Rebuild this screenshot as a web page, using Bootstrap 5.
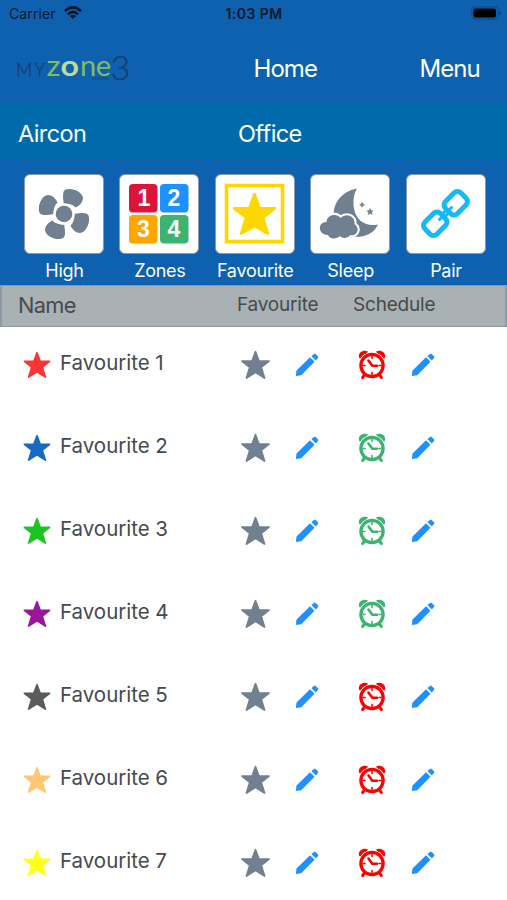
<!DOCTYPE html>
<html lang="en">
<head>
<meta charset="utf-8">
<meta name="viewport" content="width=device-width, initial-scale=1">
<title>MyZone 3 – Favourites</title>
<link href="https://cdn.jsdelivr.net/npm/bootstrap@5.3.0/dist/css/bootstrap.min.css" rel="stylesheet">
<style>
body{font-family:Inter,"Liberation Sans",sans-serif;color:#444a4e;background:#fff;overflow:hidden}
.app{width:507px;height:900px;overflow:hidden}
svg{display:block;flex:none}
.status{height:28px;background:#0d61af;color:#06182b;font-size:14px;padding:0 5px 0 9px;display:grid;grid-template-columns:1fr auto 1fr;line-height:28px}
.status svg{margin-bottom:2px}
.status .carrier{letter-spacing:.1px}
.status .clock{font-weight:600;font-size:14px;letter-spacing:.45px;margin-left:-3px}
.topnav{height:76px;background:#0d61af;color:#fff;display:grid;grid-template-columns:253.5px 166px 1fr;font-size:24px;letter-spacing:-.95px;padding-top:6px}
.topnav .brand{letter-spacing:0}
.place{height:56px;background:#016aab;color:#fff;display:grid;grid-template-columns:220px 1fr;font-size:23.5px;letter-spacing:-.6px;padding:3px 18px 0}
.modes{height:125px;background:#0d61af;color:#fff;padding:14px 21.5px 0 24px;display:grid;grid-template-columns:repeat(5,80px);justify-content:space-between}
.tile{width:80px;height:80px;background:#fff;border:1px solid #8a9aac;border-radius:6px}
.tile-label{font-size:18px;line-height:20px;margin-top:7px;margin-left:1px;letter-spacing:-.25px}
.heads{height:42px;background:#a9b1b4;border:1px solid #8d999f;border-top-color:#8096aa;border-left:2px solid #8b9aa6;border-right:2px solid #8b9aa6;display:grid;grid-template-columns:219px 116px 1fr;padding-left:16px;color:#454b4e;font-size:19px;line-height:37px;letter-spacing:-.2px}
.heads .first{font-size:21.8px;line-height:39px;letter-spacing:-.7px}
.fav-row{height:83px;display:grid;grid-template-columns:37px 179.5px 55.5px 63px 53px 1fr;padding:0 0 7px 23px}
.fav-name{font-size:20.5px;letter-spacing:-.02px;line-height:24px;padding-bottom:4px}
</style>
<script src="https://cdn.jsdelivr.net/npm/bootstrap@5.3.0/dist/js/bootstrap.bundle.min.js"></script>
</head>
<body>
<svg width="0" height="0" class="position-absolute" aria-hidden="true">
  <symbol id="star" viewBox="0 0 30 30"><path d="M15 1.800 18.400 11.100H28.500L20.700 17.300 24 28 15 22.200 6 28 9.300 17.300 1.500 11.100H11.600Z" fill="currentColor" stroke="currentColor" stroke-width="1.800" stroke-linejoin="round"/></symbol>
  <symbol id="pencil" viewBox="0 0 24 24"><path d="M.8 23 1.500 17.600 15 4.200 19.500 8.700 6.200 22.200ZM16.400 3 19 .9Q19.800.2 20.600.9L23 3.300Q23.700 4.100 23 4.900L20.800 7.400Z" fill="currentColor"/></symbol>
  <symbol id="alarm" viewBox="0 0 28 30"><g fill="none" stroke="currentColor" stroke-linecap="round">
    <circle cx="14" cy="15.500" r="11.100" stroke-width="3.300"/>
    <path d="M6 25.500 4.700 27.500M22 25.500 23.300 27.500" stroke-width="3.200"/>
    <path d="M14 6.500v2M14 22.500v2M5 15.500h2M21 15.500h2" stroke-width="1.600"/>
    <path d="M10.500 10.500 14.300 15.800 19 15.700" stroke-width="2.600" stroke-linejoin="round"/></g>
    <path d="M1.200 8C-.6 3.300 4.600-1 10 1.600L9 3.100Q4.800 4.300 2.200 8.400ZM26.800 8C28.600 3.300 23.400-1 18 1.600L19 3.100Q23.200 4.300 25.800 8.400Z" fill="currentColor"/></symbol>
</svg>
<div class="app">
  <div class="status">
    <div class="d-flex align-items-center"><span class="carrier me-1">Carrier</span>
      <svg width="18" height="14" viewBox="0 0 18 14" fill="none" stroke="#041322" stroke-width="2.500" class="ms-1"><path d="M1 5.200Q9-2.400 17 5.200M3.900 8.200Q9 3.600 14.100 8.200"/><path d="M9 13 5.900 9.900Q9 7.500 12.100 9.900Z" fill="#041322" stroke="none"/></svg>
    </div>
    <div class="clock">1:03 PM</div>
    <div class="d-flex align-items-center justify-content-end"><svg width="31" height="14" viewBox="0 0 31 14"><rect x=".8" y=".8" width="26.400" height="12.400" rx="3.600" fill="none" stroke="#0a4d8d" stroke-width="1.200"/><rect x="2.500" y="2.500" width="22.500" height="9" rx="2" fill="#000"/><path d="M28.500 5v4q1.600-.5 1.600-2t-1.600-2" fill="#084277"/></svg></div>
  </div>
  <nav class="topnav align-items-center">
    <svg class="ms-3 brand" width="118" height="48" viewBox="0 -8 118 48" font-family="Lato, sans-serif">
      <text x="0" y="22.500" font-size="18" fill="#173e69" textLength="29" lengthAdjust="spacing" font-weight="300" stroke="#173e69" stroke-width=".25">MY</text>
      <g font-size="29" fill="#80bd59"><text x="30.500" y="22.500" textLength="14" lengthAdjust="spacingAndGlyphs">z</text><text x="64" y="22.500" textLength="31" lengthAdjust="spacing">ne</text></g>
      <text x="44.500" y="22.500" font-size="29" font-weight="700" fill="#bddb98" textLength="18.500" lengthAdjust="spacingAndGlyphs">o</text>
      <text x="94.500" y="26.500" font-size="34" font-weight="300" fill="#173e69" stroke="#173e69" stroke-width=".3">3</text>
      <path d="M76 25.500h16" stroke="#174f82" stroke-width="2.500" stroke-dasharray="2 .8"/>
    </svg>
    <span>Home</span><span>Menu</span>
  </nav>
  <div class="place align-items-center"><span>Aircon</span><span>Office</span></div>
  <div class="modes text-center">
    <div class="d-flex flex-column align-items-center"><div class="tile">
      <svg width="78" height="78" viewBox="0 0 78 78" fill="#708090"><path id="blade" d="M39 29Q36.500 17 40 14.700C46.500 12 57.500 16.500 58 23C57.500 28 54.500 30.500 50.500 32.500Q46 27.700 39 29Z"/><use href="#blade" transform="rotate(90 39 39)"/><use href="#blade" transform="rotate(180 39 39)"/><use href="#blade" transform="rotate(270 39 39)"/><circle cx="39" cy="39" r="10.800" fill="#fff"/><circle cx="39" cy="39" r="8.300"/></svg>
      </div><div class="tile-label">High</div></div>
    <div class="d-flex flex-column align-items-center"><div class="tile">
      <svg width="78" height="78" viewBox="0 0 78 78" font-family="'Liberation Sans', sans-serif" font-weight="700" font-size="23" text-anchor="middle"><rect x="9" y="9" width="28.500" height="28.500" rx="4" fill="#dc143c"/><rect x="40" y="9" width="28.500" height="28.500" rx="4" fill="#1e90ff"/><rect x="9" y="40" width="28.500" height="28.500" rx="4" fill="#ffa500"/><rect x="40" y="40" width="28.500" height="28.500" rx="4" fill="#3cb371"/><g fill="#fff"><text x="24" y="31">1</text><text x="54" y="31">2</text><text x="23.500" y="61.500">3</text><text x="54" y="61.500">4</text></g></svg>
      </div><div class="tile-label">Zones</div></div>
    <div class="d-flex flex-column align-items-center"><div class="tile">
      <svg width="78" height="78" viewBox="0 0 78 78"><rect x="10.500" y="10.500" width="56" height="56" fill="none" stroke="#ffd700" stroke-width="3.600"/><path d="M38.500 19 43.600 33.300H59L47 42.700 51.800 58.500 38.500 51 25.200 58.500 30 42.700 18 33.300H33.400Z" fill="#ffd700" stroke="#ffd700" stroke-width="2.600" stroke-linejoin="round"/></svg>
      </div><div class="tile-label">Favourite</div></div>
    <div class="d-flex flex-column align-items-center"><div class="tile">
      <svg width="78" height="78" viewBox="0 0 78 78"><path d="M46 13.500C30 16.500 19 30 24 47C28 58 38 63 50 61.500C58 60.500 64 56 67 49.500C55 52 46.500 46 43.500 36C41.500 27.500 42.500 19 46 13.500Z" fill="#708090"/><path d="M17 60C7 60 6 47 15.500 47C16 39 26 38 29.500 43C36 37 44.500 42 43.500 49C50 54 45.500 61.500 39.500 60C36 64 31 63.500 29 61C25 65 18 63.500 17 60Z" fill="#708090" stroke="#fff" stroke-width="4" paint-order="stroke"/><path d="M51 27.300 52 29 53.700 29.700 52 30.700 51 32.200 50 30.700 48.600 29.700 50.200 29ZM59 33.500 60 35.500 62 35.700 60.700 37.300 61.200 39.500 59 38.500 57 39.500 57.400 37.300 56 35.700 58.200 35.500Z" fill="#708090" stroke="#708090" stroke-width=".5"/></svg>
      </div><div class="tile-label">Sleep</div></div>
    <div class="d-flex flex-column align-items-center"><div class="tile">
      <svg width="78" height="78" viewBox="0 0 78 78" fill="none" stroke="#13b9fb" stroke-width="5" stroke-linecap="round"><g transform="rotate(-45 38.500 38.500)"><rect x="13" y="30" width="22" height="17" rx="5"/><rect x="42" y="30" width="22" height="17" rx="5"/><path d="M30 38.500H34M43 38.500H47M36 36.700H41M36 40.300H41" stroke-width="3"/></g></svg>
      </div><div class="tile-label">Pair</div></div>
  </div>
  <div class="heads"><span class="first">Name</span><span>Favourite</span><span>Schedule</span></div>
  <main id="list"></main>
</div>
<script>
const red='#ff0000', green='#3cb371';
const rows=[['#fb3436',red],['#1769c2',green],['#1ac51f',green],['#9c169d',green],['#5b5b5b',red],['#ffc773',red],['#ffff1a',red]];
const icon=(id,w,h,c)=>`<svg width="${w}" height="${h}" style="color:${c}"><use href="#${id}"/></svg>`;
document.getElementById('list').innerHTML=rows.map(([c,a],i)=>`<div class="fav-row align-items-center">${icon('star',28,28,c)}<span class="fav-name">Favourite ${i+1}</span>${icon('star',31,30,'#708090')}${icon('pencil',24,24,'#1e90ff')}${icon('alarm',28,30,a)}${icon('pencil',24,24,'#1e90ff')}</div>`).join('');
</script>
</body>
</html>
